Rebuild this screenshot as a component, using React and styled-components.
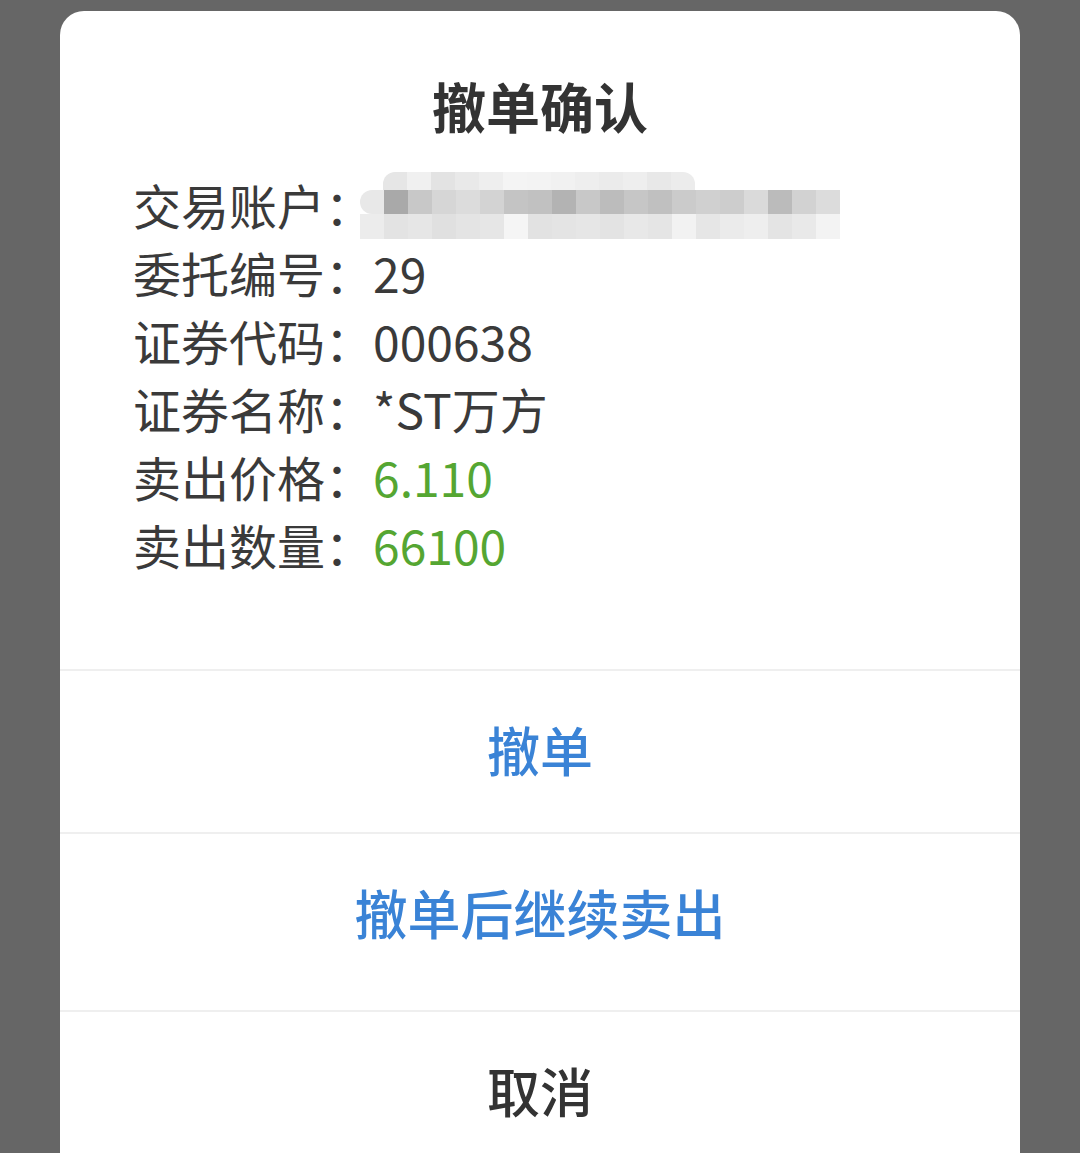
import React from "react";
import styled, { createGlobalStyle } from "styled-components";

const GlobalStyle = createGlobalStyle`
	html, body {
		margin: 0;
		padding: 0;
		height: 1153px;
		overflow: hidden;
		background: #666666;
	}
	body {
		font-family: "Noto Sans CJK SC", "Noto Sans", sans-serif;
	}
`;

const Screen = styled.div`
	padding: 11px 60px 0;
`;

const Card = styled.div`
	background: #ffffff;
	border-radius: 24px;
	height: 1170px;
	display: flex;
	flex-direction: column;
	overflow: hidden;
`;

const Title = styled.div`
	margin-top: 60px;
	height: 70px;
	line-height: 70px;
	text-align: center;
	font-size: 54px;
	font-weight: 700;
	color: #333333;
`;

const Info = styled.div`
	margin-top: 29px;
	padding-left: 73px;
	display: flex;
	flex-direction: column;
`;

const Row = styled.div`
	display: flex;
	align-items: center;
	height: 68px;
	font-size: 48px;
	color: #3a3a3a;
`;

const Label = styled.span`
	width: 240px;
	flex: none;
	white-space: nowrap;
`;

const Value = styled.span`
	color: ${props => (props.$green ? "#55a632" : "#3a3a3a")};
`;

const Mosaic = styled.div`
	display: flex;
	flex-direction: column;
	margin-left: -13px;
	margin-top: 2px;
	filter: blur(0.6px);
`;

const MosaicRow = styled.div`
	display: flex;
	height: ${props => props.$h || 24}px;
	padding-left: ${props => props.$indent || 0}px;
`;

const Tile = styled.div`
	width: 24px;
	height: 100%;
	background: ${props => props.$c};
	&:first-child {
		border-top-left-radius: ${props => props.$round || 0}px;
		border-bottom-left-radius: ${props => props.$roundBottom || 0}px;
	}
	&:last-child {
		border-top-right-radius: ${props => props.$roundEnd || 0}px;
	}
`;

const Actions = styled.div`
	margin-top: 91px;
	display: flex;
	flex-direction: column;
`;

const Action = styled.div`
	border-top: 2px solid #efefef;
	height: ${props => props.$h}px;
	box-sizing: border-box;
	padding-top: 43px;
	text-align: center;
	font-size: 53px;
	line-height: 70px;
	font-weight: 500;
	color: ${props => (props.$primary ? "#3a83d6" : "#333333")};
`;

const mosaicRows = [
	{
		indent: 23,
		h: 18,
		round: 12,
		tiles: ["#e6e6e6", "#f0f0f0", "#e3e3e3", "#e9e9e9", "#eeeeee", "#f4f4f4", "#f3f3f3", "#f1f1f1", "#eeeeee", "#ebebeb", "#eeeeee", "#e8e8e8", "#ececec"]
	},
	{
		indent: 0,
		h: 24,
		round: 18,
		tiles: ["#e8e8e8", "#a9a9a9", "#c8c8c8", "#d6d6d6", "#dcdcdc", "#d3d3d3", "#c4c4c4", "#c1c1c1", "#b3b3b3", "#c8c8c8", "#bcbcbc", "#c6c6c6", "#c0c0c0", "#cbcbcb", "#d0d0d0", "#cdcdcd", "#dadada", "#bbbbbb", "#d2d2d2", "#dcdcdc"]
	},
	{
		indent: 0,
		h: 25,
		tiles: ["#ececec", "#e3e3e3", "#e6e6e6", "#e0e0e0", "#e4e4e4", "#e6e6e6", "#f5f5f5", "#e2e2e2", "#e4e4e4", "#e6e6e6", "#e3e3e3", "#e8e8e8", "#e5e5e5", "#f2f2f2", "#e6e6e6", "#ebebeb", "#eeeeee", "#e4e4e4", "#e9e9e9", "#f3f3f3"]
	}
];

const rows = [
	{ label: "委托编号：", value: "29" },
	{ label: "证券代码：", value: "000638" },
	{ label: "证券名称：", value: "*ST万方" },
	{ label: "卖出价格：", value: "6.110", green: true },
	{ label: "卖出数量：", value: "66100", green: true }
];

export default function App() {
	return (
		<>
			<GlobalStyle />
			<Screen>
				<Card>
					<Title>撤单确认</Title>

					<Info>
						<Row>
							<Label>交易账户：</Label>
							<Mosaic>
								{mosaicRows.map((r, i) => (
									<MosaicRow key={i} $indent={r.indent} $h={r.h}>
										{r.tiles.map((c, j) => (
											<Tile key={j} $c={c} $round={r.round} $roundBottom={i === 1 ? 18 : 0} $roundEnd={i === 0 ? 12 : 0} />
										))}
									</MosaicRow>
								))}
							</Mosaic>
						</Row>
						{rows.map(r => (
							<Row key={r.label}>
								<Label>{r.label}</Label>
								<Value $green={r.green}>{r.value}</Value>
							</Row>
						))}
					</Info>

					<Actions>
						<Action $primary $h={163}>撤单</Action>
						<Action $primary $h={178}>撤单后继续卖出</Action>
						<Action $h={170}>取消</Action>
					</Actions>
				</Card>
			</Screen>
		</>
	);
}
